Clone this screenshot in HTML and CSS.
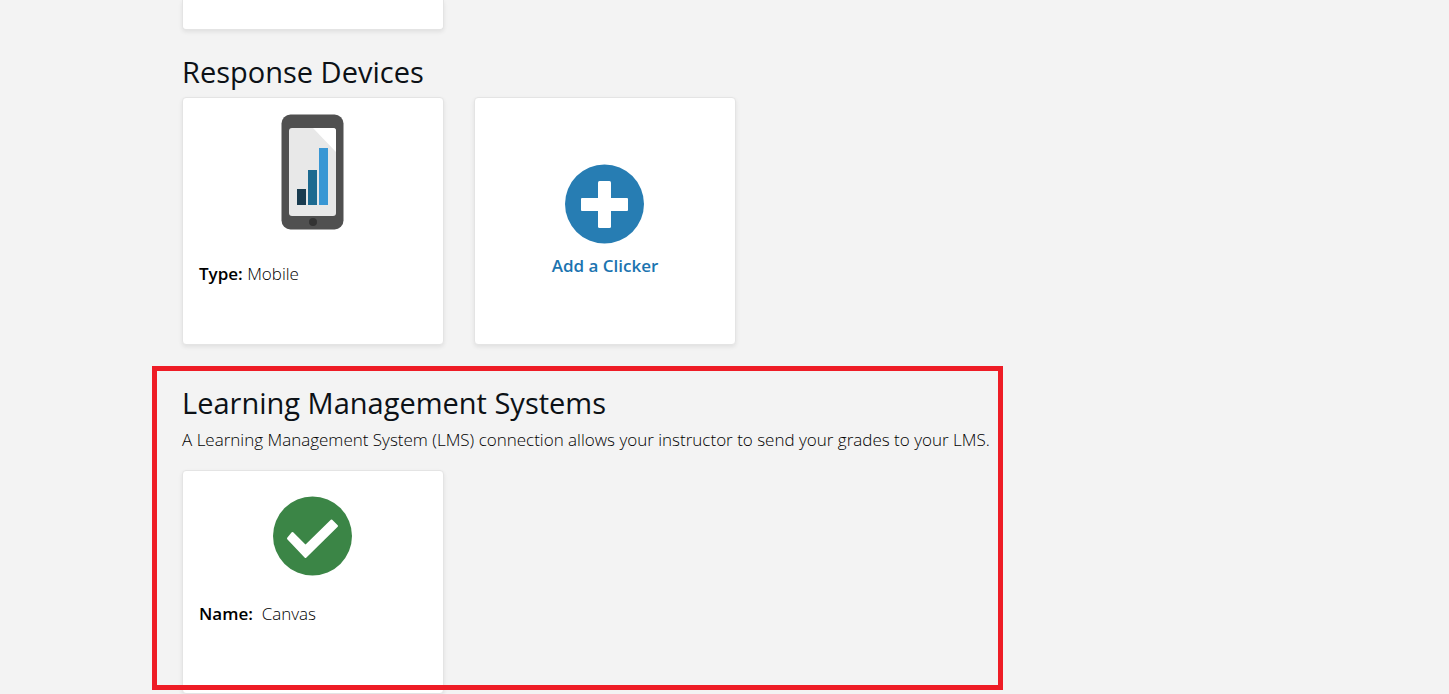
FILE: index.html
```html
<!DOCTYPE html>
<html lang="en">
<head>
  <meta charset="UTF-8">
  <meta name="viewport" content="width=device-width, initial-scale=1.0">
  <title>Account Profile</title>
  <link rel="stylesheet" href="styles.css">
</head>
<body>
<main class="container">
  <section class="section">
    <div class="card card-end"></div>
  </section>

  <section class="section">
    <h2>Response Devices</h2>
    <div class="cards">
      <div class="card">
        <svg class="device-icon" viewBox="0 0 64 116" aria-hidden="true">
          <rect x="0.5" y="0.5" width="62" height="115" rx="9" fill="#505050"/>
          <rect x="8" y="14" width="47" height="88" rx="3" fill="#e8e8e8"/>
          <path d="M32 14h20a3 3 0 0 1 3 3v21z" fill="#fff"/>
          <rect x="16" y="75" width="9" height="16" fill="#1a3c50"/>
          <rect x="27" y="56" width="9" height="35" fill="#1d6a90"/>
          <rect x="38" y="34" width="9" height="57" fill="#3997d4"/>
          <circle cx="32" cy="108" r="4" fill="#333"/>
        </svg>
        <p class="detail device-type"><strong>Type:</strong> Mobile</p>
      </div>
      <button type="button" class="card add-card">
        <svg class="round-icon" viewBox="0 0 80 80" aria-hidden="true">
          <circle cx="39.500" cy="40" r="39.500" fill="#277db3"/>
          <rect x="33" y="17" width="13" height="47" rx="1.500" fill="#fff"/>
          <rect x="16" y="34" width="47" height="13" rx="1" fill="#fff"/>
        </svg>
        <span>Add a Clicker</span>
      </button>
    </div>
  </section>

  <section class="section lms">
    <h2>Learning Management Systems</h2>
    <p class="intro">A Learning Management System (LMS) connection allows your instructor to send your grades to your LMS.</p>
    <div class="card lms-card">
      <svg class="round-icon" viewBox="0 0 80 80" aria-hidden="true">
        <circle cx="39.500" cy="40" r="39.500" fill="#3b8546"/>
        <path d="M19.500 37L32.500 50L58.500 24.500L64 30L32.500 61L15 42.500z" fill="#fff" stroke="#fff" stroke-width="2" stroke-linejoin="round"/>
      </svg>
      <p class="detail"><strong>Name:</strong>&nbsp; Canvas</p>
    </div>
    <div class="highlight"></div>
  </section>
</main>
</body>
</html>
```
FILE: styles.css
```css
* {
  box-sizing: border-box;
}
body {
  margin: 0;
  background-color: #f3f3f3;
  color: #0c1116;
  font-family: "Open Sans", Arial, sans-serif;
  font-size: 17px;
  font-weight: 300;
  line-height: 24px;
}
h2 {
  margin: 0 0 5px;
  font-size: 29px;
  font-weight: 400;
  line-height: 40px;
}
p {
  margin: 0;
  color: #000;
}
strong {
  font-weight: 600;
}
.container {
  padding: 0 30px 0 182px;
}
.section {
  position: relative;
  margin-bottom: 38px;
}
.cards {
  display: flex;
  flex-wrap: wrap;
  gap: 30px;
}
.card {
  display: flex;
  flex-direction: column;
  align-items: center;
  width: 262px;
  min-height: 248px;
  padding: 16px;
  background-color: #fff;
  border: 1px solid #e4e4e4;
  border-radius: 4px;
  box-shadow: 0 2px 4px rgba(0, 0, 0, 0.08);
}
.card-end {
  min-height: 30px;
  padding: 0;
  border-top: none;
  border-radius: 0 0 4px 4px;
}
.section:first-child {
  margin-bottom: 22px;
}
.device-icon {
  width: 64px;
  height: 116px;
}
.round-icon {
  width: 80px;
  height: 80px;
}
.detail {
  align-self: flex-start;
}
.device-type {
  margin-top: 32px;
}
.add-card {
  justify-content: center;
  gap: 10px;
  padding-bottom: 16px;
  color: #1b74b0;
  font: inherit;
  font-weight: 600;
  cursor: pointer;
}
.lms {
  margin-bottom: 0;
}
.intro {
  margin-bottom: 18px;
}
.lms-card {
  gap: 26px;
  min-height: 224px;
  padding-top: 25px;
}

/* red frame around the LMS section */
.highlight {
  position: absolute;
  top: -17px;
  left: -30px;
  bottom: 4px;
  width: 851px;
  border: 5px solid #ee1c25;
  pointer-events: none;
}
```
